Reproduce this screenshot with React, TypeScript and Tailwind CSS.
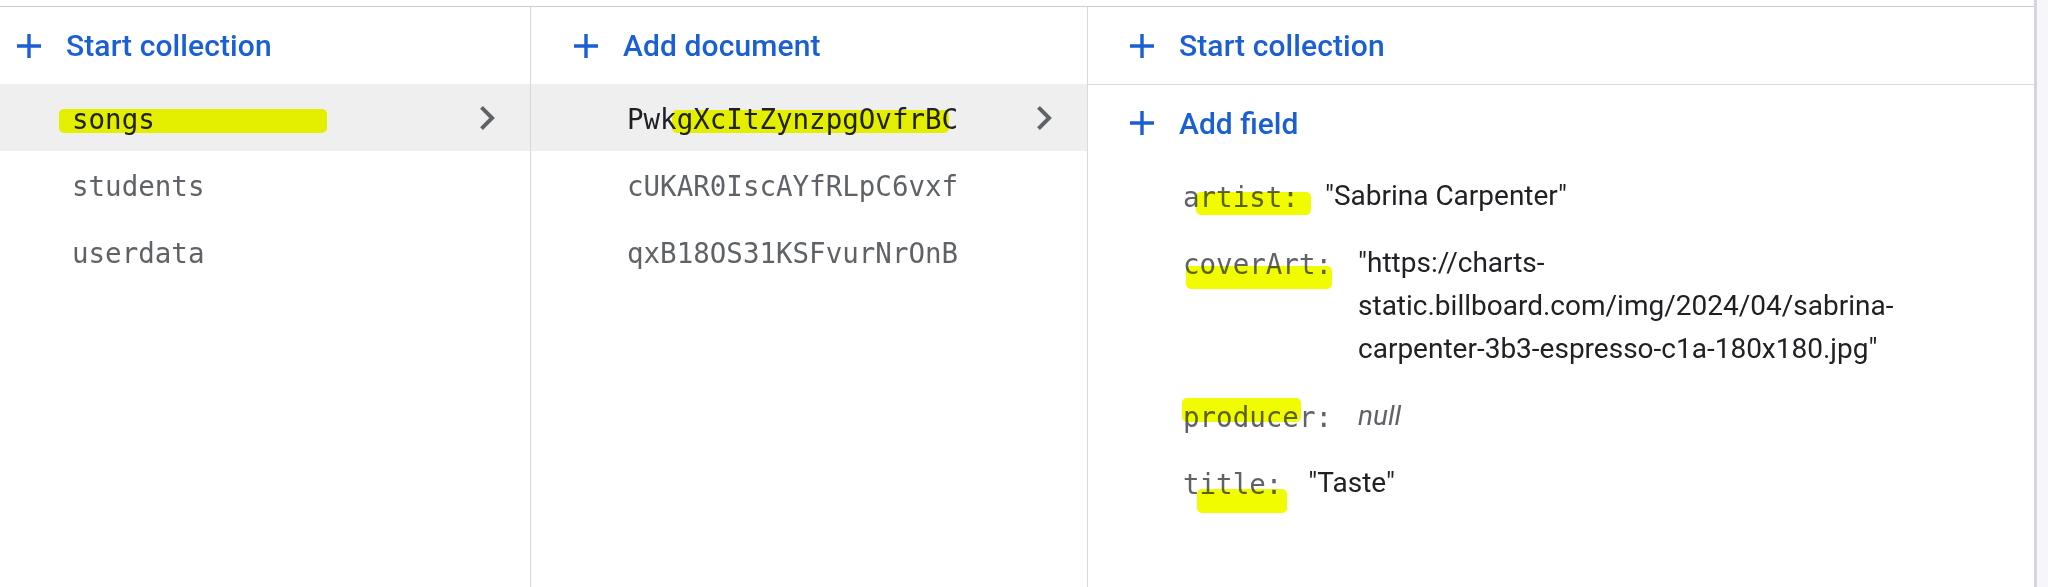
import React from "react";

const BLUE = "text-[#1a5fd3]";

function Plus() {
  return (
    <svg width="24" height="24" viewBox="5 5 14 14" className="shrink-0 fill-[#1a5fd3]">
      <path d="M19 13h-6v6h-2v-6H5v-2h6V5h2v6h6v2z" />
    </svg>
  );
}

function Chevron() {
  return (
    <svg width="15" height="24" viewBox="8.59 6 7.41 12" className="shrink-0 fill-[#5f6368]">
      <path d="M10 6L8.59 7.41 13.17 12l-4.58 4.59L10 18l6-6z" />
    </svg>
  );
}

const mono = "font-['DejaVu_Sans_Mono',monospace] text-[27.5px]";
const sans = "font-['Roboto',sans-serif]";

function HeaderAction({ label, pl }: { label: string; pl: string }) {
  return (
    <div className={`flex h-[77px] items-center gap-[25px] ${pl}`}>
      <Plus />
      <span className={`${sans} ${BLUE} text-[30px] font-medium tracking-[0.1px]`}>{label}</span>
    </div>
  );
}

function Row({ text, selected, pl }: { text: string; selected?: boolean; pl: string }) {
  return (
    <div className={`flex h-[67px] items-center justify-between pr-[35px] ${pl} ${selected ? "bg-[#efefef]" : ""}`}>
      <span className={`${mono} pt-[4px] ${selected ? "text-[#202124]" : "text-[#5f6368]"}`}>{text}</span>
      {selected && <Chevron />}
    </div>
  );
}

function Field({ k, children }: { k: string; children: React.ReactNode }) {
  return (
    <div className="flex items-start leading-[43px]">
      <span className={`${mono} shrink-0 text-[#5f6368]`}>{k}:</span>
      <div className={`${sans} ml-[26px] w-[620px] -translate-y-[2px] text-[28px] text-[#202124]`}>{children}</div>
    </div>
  );
}

const HL = "pointer-events-none absolute rounded-[5px] mix-blend-multiply";

export default function App() {
  return (
    <div className="relative flex h-[587px] w-[2048px] overflow-hidden bg-white">
      <div className="flex h-full w-[2037px] shrink-0 flex-col border-r-[3px] border-[#d3d6de]">
        <div className="h-[6px] shrink-0" />
        <div className="h-px shrink-0 bg-[#c9cdd7]" />
        <div className="flex flex-1">
          {/* Column 1 */}
          <div className="flex w-[531px] shrink-0 flex-col border-r border-[#d5d9e0]">
            <HeaderAction label="Start collection" pl="pl-[17px]" />
            <Row text="songs" selected pl="pl-[72px]" />
            <Row text="students" pl="pl-[72px]" />
            <Row text="userdata" pl="pl-[72px]" />
          </div>
          {/* Column 2 */}
          <div className="flex w-[557px] shrink-0 flex-col border-r border-[#d5d9e0]">
            <HeaderAction label="Add document" pl="pl-[43px]" />
            <Row text="PwkgXcItZynzpgOvfrBC" selected pl="pl-[96px]" />
            <Row text="cUKAR0IscAYfRLpC6vxf" pl="pl-[96px]" />
            <Row text="qxB18OS31KSFvurNrOnB" pl="pl-[96px]" />
          </div>
          {/* Column 3 */}
          <div className="flex flex-1 flex-col">
            <div className="border-b border-[#d5d9e0]">
              <HeaderAction label="Start collection" pl="pl-[42px]" />
            </div>
            <div className="flex h-[76px] items-center gap-[25px] pl-[42px]">
              <Plus />
              <span className={`${sans} ${BLUE} text-[30px] font-medium`}>Add field</span>
            </div>
            <div className="flex flex-col gap-[24px] pl-[95px] pt-[15px]">
              <Field k="artist">"Sabrina Carpenter"</Field>
              <Field k="coverArt">"https://charts-static.billboard.com/img/2024/04/sabrina-carpenter-3b3-espresso-c1a-180x180.jpg"</Field>
              <Field k="producer">
                <span className="italic text-[#5f6368]">null</span>
              </Field>
              <Field k="title">"Taste"</Field>
            </div>
          </div>
        </div>
      </div>
      <div className="flex-1 bg-[#f7f7f9]" />

      {/* highlighter marks */}
      <div className={`${HL} left-[59px] top-[109px] h-[24px] w-[268px] bg-[#f4ff00]`} />
      <div className={`${HL} left-[672px] top-[110px] h-[23px] w-[277px] bg-[#f4ff00]`} />
      <div className={`${HL} left-[1196px] top-[192px] h-[23px] w-[115px] bg-[#f2fc00]`} />
      <div className={`${HL} left-[1186px] top-[266px] h-[23px] w-[146px] bg-[#f2fc00]`} />
      <div className={`${HL} left-[1182px] top-[398px] h-[24px] w-[119px] bg-[#f2fc00]`} />
      <div className={`${HL} left-[1197px] top-[489px] h-[24px] w-[90px] bg-[#f2fc00]`} />
    </div>
  );
}
